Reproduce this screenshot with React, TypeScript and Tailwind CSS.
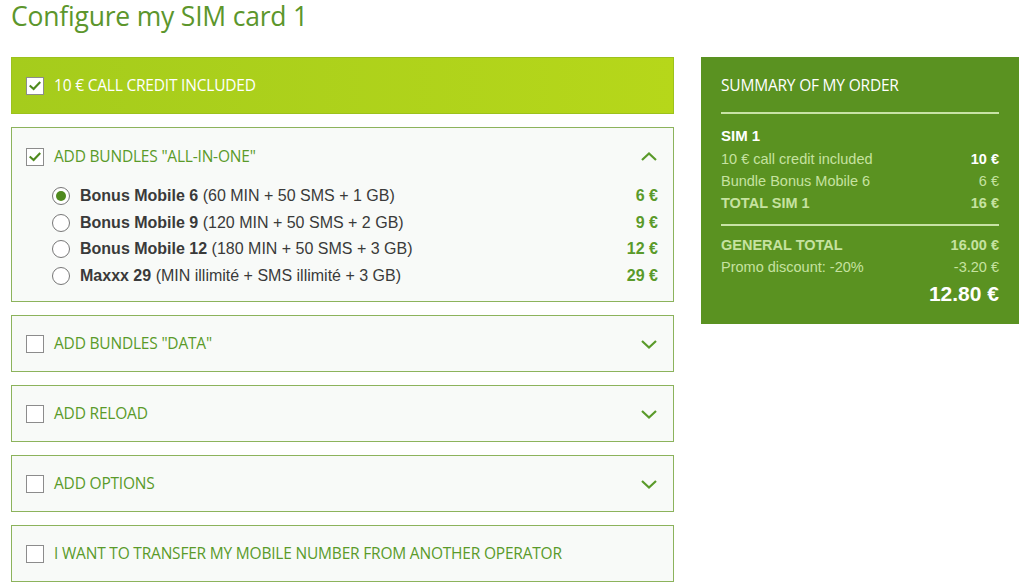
import React from "react";

const Check = () => (
  <svg width="12" height="10" viewBox="0 0 12 10" fill="none">
    <path d="M1.5 5.2 L4.6 8 L10.5 1.8" stroke="#4f8a1e" strokeWidth="2.2" strokeLinecap="square" />
  </svg>
);

const Box = ({ checked }: { checked?: boolean }) => (
  <div className="w-[18px] h-[18px] border border-[#8c8c8c] bg-white flex items-center justify-center shrink-0">
    {checked && <Check />}
  </div>
);

const Chevron = ({ up }: { up?: boolean }) => (
  <svg width="18" height="12" viewBox="0 0 18 12" fill="none" className={up ? "rotate-180" : ""}>
    <path d="M2 3 L9 9.5 L16 3" stroke="#5a9a2a" strokeWidth="2.2" />
  </svg>
);

const Radio = ({ on }: { on?: boolean }) => (
  <div className="w-[18px] h-[18px] rounded-full border border-[#777] bg-white flex items-center justify-center shrink-0">
    {on && <div className="w-[10px] h-[10px] rounded-full bg-[#4f8a1e]" />}
  </div>
);

const head = { fontFamily: '"Open Sans", Lato, sans-serif' };
const arial = { fontFamily: '"Liberation Sans", Arial, sans-serif' };

const labelCls = "ml-[10px] text-[15.5px] font-medium text-[#5a9a2a] tracking-[-0.2px]";

const Card = ({ label, chevron }: { label: string; chevron?: boolean }) => (
  <div className="h-[57px] border border-[#8cb35c] bg-[#f8faf8] flex items-center pl-[14px] pr-[15px]">
    <Box />
    <span className={labelCls} style={head}>{label}</span>
    <div className="ml-auto">{chevron && <Chevron />}</div>
  </div>
);

const bundles = [
  { name: "Bonus Mobile 6", d: "(60 MIN + 50 SMS + 1 GB)", p: "6 €", on: true },
  { name: "Bonus Mobile 9", d: "(120 MIN + 50 SMS + 2 GB)", p: "9 €" },
  { name: "Bonus Mobile 12", d: "(180 MIN + 50 SMS + 3 GB)", p: "12 €" },
  { name: "Maxxx 29", d: "(MIN illimité + SMS illimité + 3 GB)", p: "29 €" },
];

export default function App() {
  return (
    <div className="w-[1024px] h-[588px] bg-white overflow-hidden">
      <h1 className="pl-[11px] text-[26.5px] leading-[32px] text-[#5c962c] tracking-[-0.2px]" style={head}>
        Configure my SIM card 1
      </h1>
      <div className="flex mt-[25px] pl-[11px]">
        <div className="w-[663px] flex flex-col gap-[13px]">
          <div className="h-[57px] border border-[#9cc21c] bg-gradient-to-r from-[#a5cc1c] to-[#b6d71a] flex items-center pl-[14px]">
            <Box checked />
            <span className="ml-[10px] text-[15.5px] font-medium text-white tracking-[-0.2px]" style={head}>10 € CALL CREDIT INCLUDED</span>
          </div>
          <div className="h-[175px] border border-[#8cb35c] bg-[#f8faf8] pl-[14px] pr-[15px] pt-[19px]">
            <div className="flex items-center h-[20px]">
              <Box checked />
              <span className={labelCls} style={head}>ADD BUNDLES "ALL-IN-ONE"</span>
              <div className="ml-auto"><Chevron up /></div>
            </div>
            <div className="mt-[20px] pl-[26px] flex flex-col gap-[8px]" style={arial}>
              {bundles.map((b) => (
                <div key={b.name} className="flex items-center h-[18.5px] text-[16px] text-[#3a3a3a]">
                  <Radio on={b.on} />
                  <span className="ml-[10px]"><b>{b.name}</b> {b.d}</span>
                  <span className="ml-auto font-bold text-[#5a9a2a]">{b.p}</span>
                </div>
              ))}
            </div>
          </div>
          <Card label={'ADD BUNDLES "DATA"'} chevron />
          <Card label="ADD RELOAD" chevron />
          <Card label="ADD OPTIONS" chevron />
          <Card label="I WANT TO TRANSFER MY MOBILE NUMBER FROM ANOTHER OPERATOR" />
        </div>
        <div className="ml-[27px] w-[318px] h-[267px] bg-[#5a9221] px-[20px] pt-[17px]">
          <div className="text-[15.5px] font-medium text-white tracking-[-0.2px] leading-[22px]" style={head}>SUMMARY OF MY ORDER</div>
          <div className="mt-[16px] h-[2px] bg-[#c9e3a6]" />
          <div className="mt-[12px] text-[15px] font-bold text-white leading-[20px]" style={arial}>SIM 1</div>
          <div className="text-[14.5px] leading-[22px] text-[#c6e2a0] mt-[2px]" style={arial}>
            <div className="flex"><span>10 € call credit included</span><span className="ml-auto font-bold text-white">10 €</span></div>
            <div className="flex"><span>Bundle Bonus Mobile 6</span><span className="ml-auto">6 €</span></div>
            <div className="flex font-bold"><span>TOTAL SIM 1</span><span className="ml-auto">16 €</span></div>
          </div>
          <div className="mt-[10px] h-[2px] bg-[#c9e3a6]" />
          <div className="text-[14.5px] leading-[22px] text-[#c6e2a0] mt-[8px]" style={arial}>
            <div className="flex font-bold"><span>GENERAL TOTAL</span><span className="ml-auto">16.00 €</span></div>
            <div className="flex"><span>Promo discount: -20%</span><span className="ml-auto">-3.20 €</span></div>
          </div>
          <div className="text-right text-[21px] font-bold text-white leading-[28px] mt-[2px]" style={arial}>12.80 €</div>
        </div>
      </div>
    </div>
  );
}
